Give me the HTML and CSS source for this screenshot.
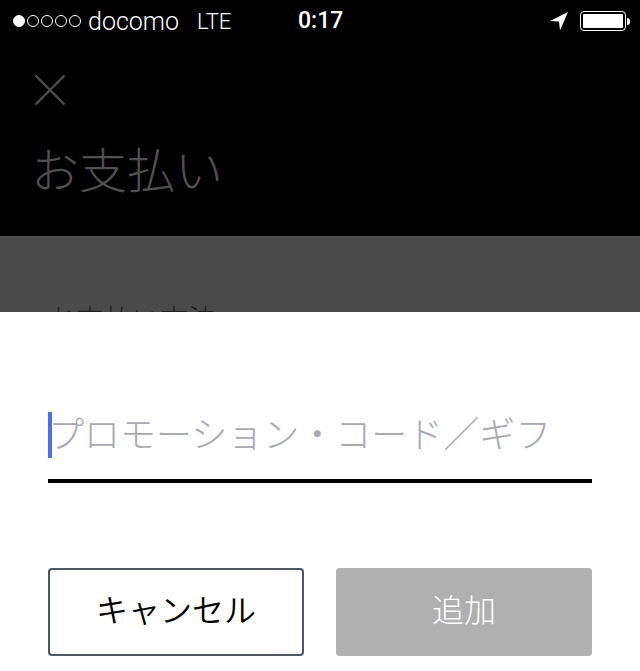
FILE: index.html
```html
<!DOCTYPE html>
<html lang="ja">
<head>
<meta charset="utf-8">
<title>お支払い</title>
<link rel="stylesheet" href="styles.css">
</head>
<body>
<div class="screen">
  <div class="status">
    <div class="status-left">
      <div class="signal">
        <span class="dot on"></span><span class="dot"></span><span class="dot"></span><span class="dot"></span><span class="dot"></span>
      </div>
      <span class="carrier">docomo</span>
      <span class="network">LTE</span>
    </div>
    <div class="clock">0:17</div>
    <div class="status-right">
      <svg class="arrow" width="20" height="20" viewBox="0 0 20 20"><path d="M19 1 L1 10 L10 10.5 L11 19.5 Z" fill="#fff"/></svg>
      <div class="battery"><div class="battery-fill"></div></div>
      <div class="battery-tip"></div>
    </div>
  </div>
  <header class="header">
    <svg class="close" width="32" height="32" viewBox="0 0 32 32"><path d="M1.5 1.5 L30.5 30.5 M30.5 1.5 L1.5 30.5" stroke="#4d4d4d" stroke-width="2.4" fill="none"/></svg>
    <h1 class="title">お支払い</h1>
  </header>
  <div class="behind">
    <h2 class="section">お支払い方法</h2>
  </div>
  <div class="sheet">
    <div class="field">
      <span class="caret"></span>
      <span class="placeholder">プロモーション・コード／ギフ</span>
    </div>
    <div class="actions">
      <button class="btn cancel">キャンセル</button>
      <button class="btn add">追加</button>
    </div>
  </div>
</div>
</body>
</html>
```
FILE: styles.css
```css
* { box-sizing: border-box; }
html, body { margin: 0; padding: 0; }
body {
  width: 640px;
  height: 671px;
  overflow: hidden;
  background: #000;
  font-family: "Noto Sans CJK JP", "Noto Sans", sans-serif;
}
.screen {
  position: relative;
  width: 640px;
  height: 671px;
  overflow: hidden;
  display: flex;
  flex-direction: column;
}
.status {
  position: relative;
  height: 40px;
  flex: none;
  display: flex;
  align-items: center;
  justify-content: space-between;
  padding: 2px 10px 0 13px;
  color: #fff;
  font-family: Roboto, "Liberation Sans", Arial, sans-serif;
}
.status-left { display: flex; align-items: center; }
.signal { display: flex; gap: 1px; margin-right: 6px; }
.dot {
  width: 12px;
  height: 12px;
  border: 1px solid #fff;
  border-radius: 50%;
  margin-right: 1px;
}
.dot.on { background: #fff; }
.carrier { font-size: 25px; font-weight: 300; margin-right: 18px; }
.network { font-size: 22px; font-weight: 300; }
.clock {
  position: absolute;
  left: 298px;
  top: 6px;
  font-size: 23px;
  font-weight: 500;
  line-height: 30px;
}
.status-right { display: flex; align-items: center; }
.arrow { margin-right: 11px; margin-top: -1px; }
.battery {
  width: 46px;
  height: 20px;
  border: 1.5px solid #fff;
  border-radius: 4px;
  padding: 2px;
}
.battery-fill { width: 100%; height: 100%; background: #fff; border-radius: 1px; }
.battery-tip { width: 3px; height: 7px; background: #fff; border-radius: 0 3px 3px 0; margin-left: 1px; }
.header {
  height: 196px;
  flex: none;
  padding: 34px 0 0 34px;
  background: #000;
}
.close { display: block; }
.title {
  margin: 29px 0 0 -3px;
  font-size: 48px;
  font-weight: 300;
  line-height: 64px;
  color: #505050;
}
.behind {
  flex: 1;
  background: #4a4a4a;
  padding: 62px 0 0 48px;
}
.section {
  margin: 0;
  font-size: 28px;
  font-weight: 300;
  line-height: 40px;
  color: #1f1f1f;
}
.sheet {
  position: absolute;
  left: 0;
  right: 0;
  top: 312px;
  bottom: 0;
  background: #fff;
  padding: 100px 48px 0;
}
.field {
  position: relative;
  height: 71px;
  border-bottom: 4px solid #000;
  display: flex;
  align-items: flex-start;
}
.caret { width: 4px; height: 46px; background: #4a6ff0; flex: none; }
.placeholder {
  font-size: 36px;
  font-weight: 300;
  line-height: 40px;
  color: #a9a9b1;
  margin-left: -4px;
  white-space: nowrap;
}
.actions {
  display: grid;
  grid-template-columns: 1fr 1fr;
  gap: 32px;
  margin-top: 85px;
}
.btn {
  height: 88px;
  border-radius: 4px;
  font-family: inherit;
  font-size: 32px;
  font-weight: 350;
  padding: 0 0 8px;
}
.cancel { background: #fff; border: 2px solid #4f5561; color: #000; }
.add { background: #b0b0b0; border: none; color: #fff; font-weight: 300; }
```
